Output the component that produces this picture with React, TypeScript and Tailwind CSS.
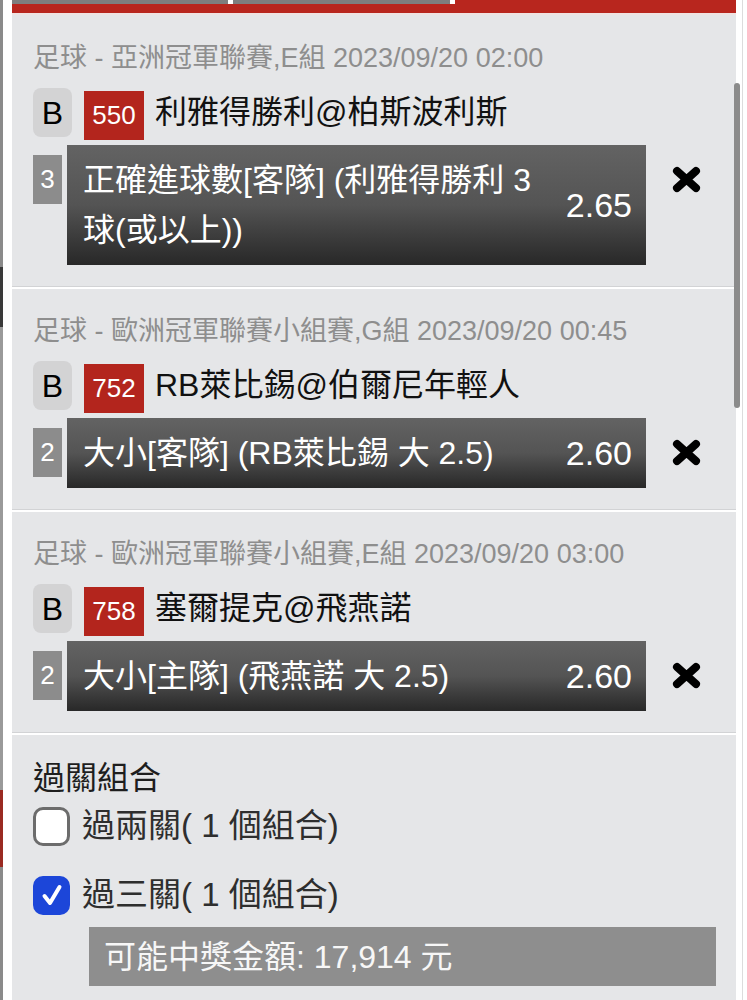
import React from "react";

type Bet = {
  league: string;
  code: string;
  match: string;
  legs: string;
  pick: string;
  odds: string;
};

const bets: Bet[] = [
  {
    league: "足球 - 亞洲冠軍聯賽,E組 2023/09/20 02:00",
    code: "550",
    match: "利雅得勝利@柏斯波利斯",
    legs: "3",
    pick: "正確進球數[客隊] (利雅得勝利 3 球(或以上))",
    odds: "2.65",
  },
  {
    league: "足球 - 歐洲冠軍聯賽小組賽,G組 2023/09/20 00:45",
    code: "752",
    match: "RB萊比錫@伯爾尼年輕人",
    legs: "2",
    pick: "大小[客隊] (RB萊比錫 大 2.5)",
    odds: "2.60",
  },
  {
    league: "足球 - 歐洲冠軍聯賽小組賽,E組 2023/09/20 03:00",
    code: "758",
    match: "塞爾提克@飛燕諾",
    legs: "2",
    pick: "大小[主隊] (飛燕諾 大 2.5)",
    odds: "2.60",
  },
];

const CloseIcon = () => (
  <svg width="31" height="29" viewBox="0 0 31 29">
    <path
      d="M6 6 L25 23 M25 6 L6 23"
      stroke="#000"
      strokeWidth="8"
      strokeLinecap="round"
      fill="none"
    />
  </svg>
);

const BetCard = ({ bet, first }: { bet: Bet; first?: boolean }) => (
  <div className="flex flex-col">
    <div className={`px-[21px] pb-[21px] ${first ? "pt-[25px]" : "pt-[24px]"}`}>
      {/* --- League line --- */}
      <div className="whitespace-nowrap text-[27px] leading-[36px] text-[#8e8e8e]">
        {bet.league}
      </div>

      {/* --- Match line --- */}
      <div className="mt-[12px] flex items-start">
        <div className="flex h-[49px] w-[39px] items-center justify-center rounded-[8px] bg-[#d3d3d4] text-[32px] leading-none text-black">
          B
        </div>
        <div className="ml-[12px] mt-[3px] flex h-[49px] w-[60px] items-center justify-center bg-[#b3251d] text-[26px] text-white">
          {bet.code}
        </div>
        <div className="ml-[11px] whitespace-nowrap text-[32px] leading-[49px] text-[#111]">
          {bet.match}
        </div>
      </div>

      {/* --- Selection --- */}
      <div className="mt-[5px] flex items-start">
        <div className="mt-[10px] flex h-[49px] w-[29px] items-center justify-center bg-[#8c8c8c] text-[26px] text-white">
          {bet.legs}
        </div>
        <div className="ml-[5px] flex w-[579px] items-center bg-gradient-to-b from-[#636363] via-[#545454] to-[#282828] py-[10px] pl-[16px] pr-[14px]">
          <div className="flex-1 text-[32px] leading-[50px] text-white">{bet.pick}</div>
          <div className="ml-[20px] text-[34px] leading-[50px] text-white">{bet.odds}</div>
        </div>
        <div className="ml-[25px] mt-[20px]">
          <CloseIcon />
        </div>
      </div>
    </div>
    <div className="h-[1px] bg-[#d2d3d5]" />
    <div className="h-[2px] bg-white" />
  </div>
);

export default function App() {
  return (
    <div
      className="flex h-[1000px] w-[747px] overflow-hidden bg-white"
      style={{ fontFamily: '"Liberation Sans", "Noto Sans CJK TC", sans-serif' }}
    >
      {/* page underneath */}
      <div className="flex w-[3px] flex-col">
        <div className="h-[267px] bg-[#8a8a8a]" />
        <div className="h-[60px] bg-[#3a3a3a]" />
        <div className="h-[463px] bg-[#9a9a9a]" />
        <div className="h-[77px] bg-[#9a2a22]" />
        <div className="flex-1 bg-[#8a8a8a]" />
      </div>
      <div className="w-[9px] bg-white" />

      {/* --- Bet slip panel --- */}
      <div className="relative flex w-[724px] flex-col bg-[#e5e6e8]">
        <div className="flex h-[4px] bg-white">
          <div className="w-[216px] bg-[#7e7e7e]" />
          <div className="ml-[5px] w-[217px] bg-[#7e7e7e]" />
          <div className="ml-[5px] flex-1 bg-[#b8261e]" />
        </div>
        <div className="h-[9px] bg-[#b8261e]" />
        <div className="h-[2px] bg-[#efe3e2]" />

        {bets.map((bet, i) => (
          <BetCard key={bet.code} bet={bet} first={i === 0} />
        ))}

        {/* --- Parlay section --- */}
        <div className="px-[21px] pt-[23px]">
          <div className="text-[32px] leading-[40px] text-[#1e1e1e]">過關組合</div>
          <div className="mt-[8px] flex items-center">
            <div className="h-[39px] w-[37px] rounded-[10px] border-[3px] border-[#6c6c6c] bg-white" />
            <div className="ml-[12px] text-[33px] leading-[40px] text-[#2e2e2e]">過兩關( 1 個組合)</div>
          </div>
          <div className="mt-[29px] flex items-center">
            <div className="flex h-[39px] w-[37px] items-center justify-center rounded-[10px] bg-[#1c46d9]">
              <svg width="24" height="26" viewBox="0 0 24 26">
                <path
                  d="M4.5 14 L10 21 L19.5 5"
                  stroke="#fff"
                  strokeWidth="4"
                  strokeLinecap="round"
                  strokeLinejoin="round"
                  fill="none"
                />
              </svg>
            </div>
            <div className="ml-[12px] text-[33px] leading-[40px] text-[#2e2e2e]">過三關( 1 個組合)</div>
          </div>
          <div className="ml-[56px] mr-[-1px] mt-[12px] flex h-[59px] items-center bg-[#8e8e8e] pl-[15px] text-[32px] text-[#f7f7f7]">
            可能中獎金額: 17,914 元
          </div>
        </div>

        {/* scrollbar */}
        <div className="absolute right-[-4px] top-[83px] h-[325px] w-[6px] rounded-full bg-[#8b8b8b]" />
      </div>

      <div className="flex flex-1">
        <div className="ml-[6px] w-[1px] bg-[#dcdcdc]" />
      </div>
    </div>
  );
}
